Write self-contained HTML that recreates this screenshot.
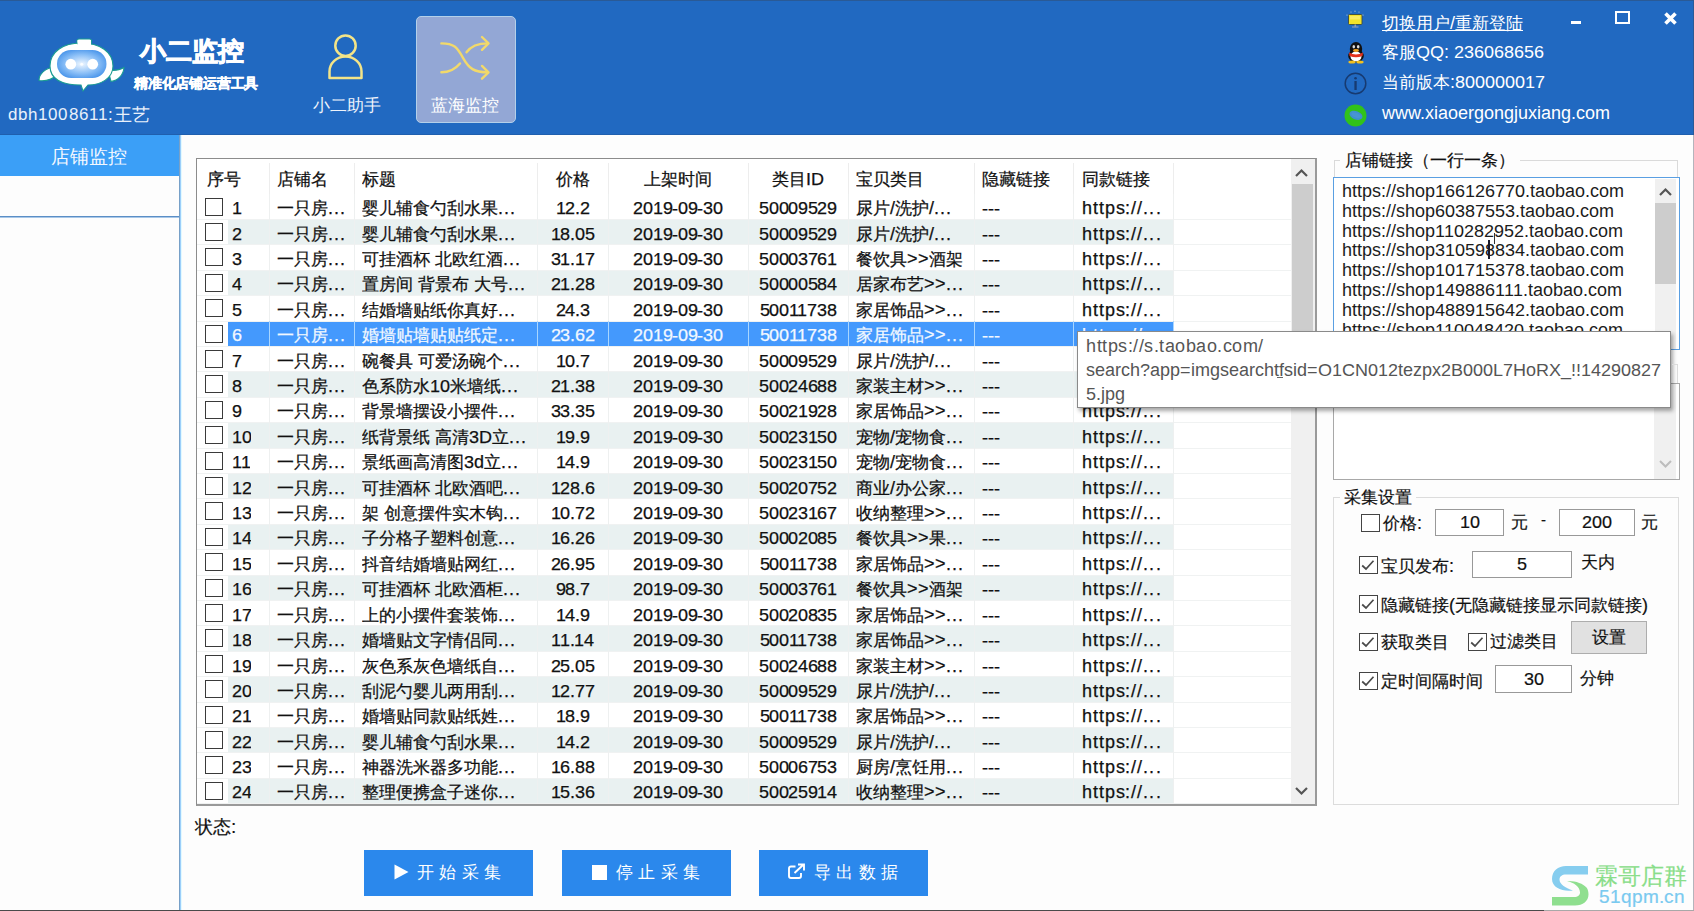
<!DOCTYPE html><html><head><meta charset="utf-8"><style>
@font-face{font-family:LS;src:local("Liberation Sans");size-adjust:106%}
*{margin:0;padding:0;box-sizing:border-box}
html,body{width:1694px;height:911px;overflow:hidden;background:#fdfdfd;font-family:LS,"Liberation Sans",sans-serif;color:#111;-webkit-text-stroke-width:0.2px}
.a{position:absolute;white-space:nowrap}
#hdr{position:absolute;left:0;top:0;width:1694px;height:135px;background:#2169c1}
.w{color:#fff;-webkit-text-stroke-width:0}
.cb{position:absolute;width:18px;height:18px;border:1.6px solid #3a3a3a;background:#fff}
.cell{position:absolute;height:25px;line-height:25px;font-size:17px;white-space:nowrap;overflow:hidden}
.c{text-align:center}
.num{letter-spacing:-0.3px}
.cell{-webkit-text-stroke-width:0.25px}
.hs{letter-spacing:0.9px}
.el{letter-spacing:1.2px}
.btn{position:absolute;top:850px;width:169px;height:46px;background:#2b88ec;color:#fff;font-size:17px;line-height:45px;letter-spacing:5.3px;-webkit-text-stroke-width:0}
.inp{position:absolute;background:#fff;border:1px solid #999;text-align:center;font-size:17px}
.sc{position:absolute;width:18.5px;height:18px;border:1.7px solid #444;background:#fff}
</style></head><body>
<div id="hdr"></div>
<div class="a" style="left:0;top:0;width:1694px;height:1px;background:#2a5a96"></div>
<div class="a" style="left:0;top:134px;width:1694px;height:1px;background:#1f5fae"></div>
<div class="a" style="left:1693px;top:0;width:1px;height:135px;background:#2a5a96"></div>
<svg class="a" style="left:30px;top:30px" width="100" height="70" viewBox="0 0 100 70">
<defs><radialGradient id="fg" cx="50%" cy="50%" r="60%"><stop offset="0" stop-color="#eef6ff"/><stop offset="0.55" stop-color="#8cc0f7"/><stop offset="1" stop-color="#3f8ee8"/></radialGradient></defs>
<g stroke="#1a9c92" stroke-width="1.1" fill="#fff">
<path d="M25 37 C15 38 9 44 9 50.5 C17 51.5 23 48.5 27 45 Z"/>
<path d="M78 40 C85 41 90 40 94 37.5 C93.5 45 88 50.5 81 51.5 Z"/>
<path d="M51 13 C70 13 83 22 83 36 C83 49 70 55 58 55 L53 61 L51 55 C32 55 20 49 20 36 C20 22 33 13 51 13Z"/>
<rect x="47" y="9" width="14.5" height="5" rx="2"/>
</g>
<rect x="47.5" y="10" width="13.5" height="6" fill="#fff"/>
<rect x="27" y="20" width="49.5" height="28" rx="14" fill="url(#fg)"/>
<circle cx="40.8" cy="34.2" r="5.4" fill="#fff"/><circle cx="62.7" cy="34.2" r="5.4" fill="#fff"/>
<circle cx="51.7" cy="34.2" r="1.5" fill="#fff" opacity="0.8"/>
</svg>
<div class="a w" style="left:140px;top:35px;font-size:26px;font-weight:bold;line-height:32px;-webkit-text-stroke:0.9px #fff">小二监控</div>
<div class="a w" style="left:134px;top:74px;font-size:14px;font-weight:bold;line-height:18px;letter-spacing:-0.2px;-webkit-text-stroke:0.4px #fff">精准化店铺运营工具</div>
<div class="a w" style="left:8px;top:102px;font-size:16.5px;line-height:24px;color:#e8f0fb"><span style="letter-spacing:1.1px">dbh1008611:</span><span style="font-size:17.5px;position:relative;top:0.5px">王艺</span></div>
<svg class="a" style="left:320px;top:30px" width="50" height="55" viewBox="0 0 50 55">
<circle cx="25.5" cy="15.7" r="10.2" stroke="#f3e488" stroke-width="2.5" fill="none"/>
<path d="M9.5 48 L9.5 41.5 A16 15 0 0 1 41.5 41.5 L41.5 48 Z" stroke="#f3e488" stroke-width="2.5" fill="none" stroke-linejoin="round"/>
</svg>
<div class="a w" style="left:313px;top:94px;font-size:17px;line-height:22px;color:#eef3fb">小二助手</div>
<div class="a" style="left:416px;top:16px;width:100px;height:107px;background:#93a7d5;border:1px solid #b4d0ea;border-radius:5px"></div>
<svg class="a" style="left:436.5px;top:33.5px" width="56" height="50" viewBox="0 0 56 50">
<g stroke="#f2d96a" stroke-width="2.4" fill="none" stroke-linecap="round" stroke-linejoin="round">
<path d="M4.4 9.4 C17 9.4 20 13 26 23.8 C32 34.6 37 38.3 51 38.3"/>
<path d="M4.4 38.3 C13 38.3 18 35.5 23 29.5"/>
<path d="M29.5 18.3 C34 12 40 9.4 51 9.4"/>
<path d="M45 3 L51.5 9.4 L45 15.8"/>
<path d="M45 31.9 L51.5 38.3 L45 44.7"/>
</g>
</svg>
<div class="a w" style="left:431px;top:94px;font-size:17px;line-height:22px">蓝海监控</div>
<svg class="a" style="left:1345px;top:10px" width="22" height="20" viewBox="0 0 22 20">
<rect x="3.5" y="4.5" width="13.5" height="10" rx="1" fill="#f3e22a" stroke="#3d4a3a" stroke-width="0.9"/>
<rect x="5" y="6" width="10" height="3.5" fill="#fbf07a" opacity="0.7"/>
<rect x="9.5" y="14.5" width="1.6" height="2.2" fill="#9aa0a0"/><rect x="7" y="16.5" width="6.5" height="1" fill="#9aa0c0"/>
<circle cx="6" cy="2" r="0.6" fill="#bcd"/><circle cx="10" cy="1.2" r="0.6" fill="#bcd"/><circle cx="14" cy="2" r="0.6" fill="#bcd"/><circle cx="18" cy="5" r="0.6" fill="#bcd"/><circle cx="2" cy="5" r="0.6" fill="#bcd"/>
</svg>
<div class="a w" style="left:1382px;top:12px;font-size:17px;line-height:22px;text-decoration:underline">切换用户/重新登陆</div>
<svg class="a" style="left:1346px;top:41px" width="20" height="23" viewBox="0 0 20 23">
<ellipse cx="10" cy="8" rx="6.2" ry="7" fill="#111"/>
<ellipse cx="10" cy="15" rx="7.8" ry="6.5" fill="#111"/>
<ellipse cx="10" cy="15.5" rx="5.5" ry="5" fill="#fff"/>
<path d="M3 11.5 Q10 15.5 17 11.5 L16.5 15 Q10 17.5 3.5 15Z" fill="#e4321c"/>
<ellipse cx="7.8" cy="5.8" rx="1.3" ry="1.8" fill="#ddd"/><ellipse cx="12.2" cy="5.8" rx="1.3" ry="1.8" fill="#ddd"/>
<ellipse cx="10" cy="9.5" rx="3" ry="1.4" fill="#f0a020"/>
<ellipse cx="6" cy="21" rx="3.6" ry="1.5" fill="#f2c020"/><ellipse cx="14" cy="21" rx="3.6" ry="1.5" fill="#f2c020"/>
</svg>
<div class="a w" style="left:1382px;top:41px;font-size:17px;line-height:22px">客服QQ: 236068656</div>
<svg class="a" style="left:1343.5px;top:71.5px" width="23" height="23" viewBox="0 0 23 23">
<circle cx="11.5" cy="11.5" r="10.3" stroke="#173a70" stroke-width="1.5" fill="none"/>
<rect x="10.4" y="9" width="2.3" height="9" fill="#173a70"/><circle cx="11.55" cy="6.2" r="1.3" fill="#173a70"/>
</svg>
<div class="a w" style="left:1382px;top:71px;font-size:17px;line-height:22px">当前版本:800000017</div>
<svg class="a" style="left:1343.5px;top:103.5px" width="23" height="23" viewBox="0 0 23 23">
<circle cx="11.5" cy="11.5" r="11" fill="#31c21a"/>
<ellipse cx="12" cy="11.3" rx="6.8" ry="4.2" transform="rotate(22 12 11.3)" fill="#3f8fcf"/>
<ellipse cx="12" cy="11.3" rx="4.8" ry="2.4" transform="rotate(22 12 11.3)" fill="#4d9ad6" opacity="0.6"/>
</svg>
<div class="a w" style="left:1382px;top:102px;font-size:16.7px;line-height:22px">www.xiaoergongjuxiang.com</div>
<div class="a" style="left:1571px;top:21px;width:10px;height:3px;background:#fff"></div>
<div class="a" style="left:1615px;top:11px;width:15px;height:13px;border:2.5px solid #fff"></div>
<svg class="a" style="left:1663px;top:11px" width="15" height="15" viewBox="0 0 15 15">
<path d="M2.5 2.5 L12.5 12.5 M12.5 2.5 L2.5 12.5" stroke="#fff" stroke-width="3.6"/></svg>
<div class="a" style="left:0;top:135px;width:179px;height:41px;background:#3b9ff7"></div>
<div class="a w" style="left:51px;top:143.5px;font-size:19px;line-height:24px;color:#f3f8ff">店铺监控</div>
<div class="a" style="left:0;top:216px;width:179px;height:1px;background:#5b8ec6"></div><div class="a" style="left:0;top:217px;width:179px;height:1px;background:#a9c8e8"></div>
<div class="a" style="left:179px;top:135px;width:1px;height:776px;background:#77a0c8"></div>
<div class="a" style="left:180px;top:135px;width:1px;height:776px;background:#9ccffa"></div>
<div class="a" style="left:181px;top:135px;width:1px;height:776px;background:#e3f9ff"></div>
<div class="a" style="left:196px;top:158px;width:1121px;height:648px;background:#fff;border:1px solid #8c8c8c;border-bottom:2px solid #9a9a9a;border-right:2px solid #9a9a9a"></div>
<div class="a" style="left:269px;top:163px;width:1px;height:31px;background:#ededed"></div>
<div class="a" style="left:354px;top:163px;width:1px;height:31px;background:#ededed"></div>
<div class="a" style="left:537px;top:163px;width:1px;height:31px;background:#ededed"></div>
<div class="a" style="left:608px;top:163px;width:1px;height:31px;background:#ededed"></div>
<div class="a" style="left:748px;top:163px;width:1px;height:31px;background:#ededed"></div>
<div class="a" style="left:848px;top:163px;width:1px;height:31px;background:#ededed"></div>
<div class="a" style="left:974px;top:163px;width:1px;height:31px;background:#ededed"></div>
<div class="a" style="left:1073px;top:163px;width:1px;height:31px;background:#ededed"></div>
<div class="a" style="left:1173px;top:163px;width:1px;height:31px;background:#ededed"></div>
<div class="cell" style="left:207px;top:167px;width:62px">序号</div>
<div class="cell" style="left:277px;top:167px;width:77px">店铺名</div>
<div class="cell" style="left:362px;top:167px;width:175px">标题</div>
<div class="cell c" style="left:537px;top:167px;width:71px">价格</div>
<div class="cell c" style="left:608px;top:167px;width:140px">上架时间</div>
<div class="cell c" style="left:748px;top:167px;width:100px">类目ID</div>
<div class="cell" style="left:856px;top:167px;width:118px">宝贝类目</div>
<div class="cell" style="left:982px;top:167px;width:91px">隐藏链接</div>
<div class="cell" style="left:1082px;top:167px;width:91px">同款链接</div>
<div class="a" style="left:197px;top:219px;width:1094px;height:1px;background:#f0f2f2"></div>
<div class="a" style="left:269px;top:194px;width:1px;height:25px;background:#eef0f0"></div>
<div class="a" style="left:354px;top:194px;width:1px;height:25px;background:#eef0f0"></div>
<div class="a" style="left:537px;top:194px;width:1px;height:25px;background:#eef0f0"></div>
<div class="a" style="left:608px;top:194px;width:1px;height:25px;background:#eef0f0"></div>
<div class="a" style="left:748px;top:194px;width:1px;height:25px;background:#eef0f0"></div>
<div class="a" style="left:848px;top:194px;width:1px;height:25px;background:#eef0f0"></div>
<div class="a" style="left:974px;top:194px;width:1px;height:25px;background:#eef0f0"></div>
<div class="a" style="left:1073px;top:194px;width:1px;height:25px;background:#eef0f0"></div>
<div class="a" style="left:1173px;top:194px;width:1px;height:25px;background:#eef0f0"></div>
<div class="cb" style="left:205px;top:198px"></div>
<div class="cell num" style="left:232px;top:196px;">1</div>
<div class="cell" style="left:277px;top:196px;">一只房<span class="el">...</span></div>
<div class="cell" style="left:362px;top:196px;">婴儿辅食勺刮水果<span class="el">...</span></div>
<div class="cell num c" style="left:537px;top:196px;width:71px;">12.2</div>
<div class="cell num c" style="left:608px;top:196px;width:140px;">2019-09-30</div>
<div class="cell num c" style="left:748px;top:196px;width:100px;">50009529</div>
<div class="cell" style="left:856px;top:196px;">尿片/洗护/<span class="el">...</span></div>
<div class="cell" style="left:982px;top:196px;">---</div>
<div class="cell" style="left:1082px;top:196px;"><span class="hs">https://</span><span class="el">...</span></div>
<div class="a" style="left:228px;top:220px;width:945px;height:25px;background:#e9f1f1"></div>
<div class="a" style="left:197px;top:244px;width:1094px;height:1px;background:#f0f2f2"></div>
<div class="a" style="left:269px;top:219px;width:1px;height:25px;background:#eef0f0"></div>
<div class="a" style="left:354px;top:219px;width:1px;height:25px;background:#eef0f0"></div>
<div class="a" style="left:537px;top:219px;width:1px;height:25px;background:#eef0f0"></div>
<div class="a" style="left:608px;top:219px;width:1px;height:25px;background:#eef0f0"></div>
<div class="a" style="left:748px;top:219px;width:1px;height:25px;background:#eef0f0"></div>
<div class="a" style="left:848px;top:219px;width:1px;height:25px;background:#eef0f0"></div>
<div class="a" style="left:974px;top:219px;width:1px;height:25px;background:#eef0f0"></div>
<div class="a" style="left:1073px;top:219px;width:1px;height:25px;background:#eef0f0"></div>
<div class="a" style="left:1173px;top:219px;width:1px;height:25px;background:#eef0f0"></div>
<div class="cb" style="left:205px;top:223px"></div>
<div class="cell num" style="left:232px;top:222px;">2</div>
<div class="cell" style="left:277px;top:222px;">一只房<span class="el">...</span></div>
<div class="cell" style="left:362px;top:222px;">婴儿辅食勺刮水果<span class="el">...</span></div>
<div class="cell num c" style="left:537px;top:222px;width:71px;">18.05</div>
<div class="cell num c" style="left:608px;top:222px;width:140px;">2019-09-30</div>
<div class="cell num c" style="left:748px;top:222px;width:100px;">50009529</div>
<div class="cell" style="left:856px;top:222px;">尿片/洗护/<span class="el">...</span></div>
<div class="cell" style="left:982px;top:222px;">---</div>
<div class="cell" style="left:1082px;top:222px;"><span class="hs">https://</span><span class="el">...</span></div>
<div class="a" style="left:197px;top:270px;width:1094px;height:1px;background:#f0f2f2"></div>
<div class="a" style="left:269px;top:244px;width:1px;height:26px;background:#eef0f0"></div>
<div class="a" style="left:354px;top:244px;width:1px;height:26px;background:#eef0f0"></div>
<div class="a" style="left:537px;top:244px;width:1px;height:26px;background:#eef0f0"></div>
<div class="a" style="left:608px;top:244px;width:1px;height:26px;background:#eef0f0"></div>
<div class="a" style="left:748px;top:244px;width:1px;height:26px;background:#eef0f0"></div>
<div class="a" style="left:848px;top:244px;width:1px;height:26px;background:#eef0f0"></div>
<div class="a" style="left:974px;top:244px;width:1px;height:26px;background:#eef0f0"></div>
<div class="a" style="left:1073px;top:244px;width:1px;height:26px;background:#eef0f0"></div>
<div class="a" style="left:1173px;top:244px;width:1px;height:26px;background:#eef0f0"></div>
<div class="cb" style="left:205px;top:248px"></div>
<div class="cell num" style="left:232px;top:247px;">3</div>
<div class="cell" style="left:277px;top:247px;">一只房<span class="el">...</span></div>
<div class="cell" style="left:362px;top:247px;">可挂酒杯 北欧红酒<span class="el">...</span></div>
<div class="cell num c" style="left:537px;top:247px;width:71px;">31.17</div>
<div class="cell num c" style="left:608px;top:247px;width:140px;">2019-09-30</div>
<div class="cell num c" style="left:748px;top:247px;width:100px;">50003761</div>
<div class="cell" style="left:856px;top:247px;">餐饮具>>酒架</div>
<div class="cell" style="left:982px;top:247px;">---</div>
<div class="cell" style="left:1082px;top:247px;"><span class="hs">https://</span><span class="el">...</span></div>
<div class="a" style="left:228px;top:271px;width:945px;height:25px;background:#e9f1f1"></div>
<div class="a" style="left:197px;top:295px;width:1094px;height:1px;background:#f0f2f2"></div>
<div class="a" style="left:269px;top:270px;width:1px;height:25px;background:#eef0f0"></div>
<div class="a" style="left:354px;top:270px;width:1px;height:25px;background:#eef0f0"></div>
<div class="a" style="left:537px;top:270px;width:1px;height:25px;background:#eef0f0"></div>
<div class="a" style="left:608px;top:270px;width:1px;height:25px;background:#eef0f0"></div>
<div class="a" style="left:748px;top:270px;width:1px;height:25px;background:#eef0f0"></div>
<div class="a" style="left:848px;top:270px;width:1px;height:25px;background:#eef0f0"></div>
<div class="a" style="left:974px;top:270px;width:1px;height:25px;background:#eef0f0"></div>
<div class="a" style="left:1073px;top:270px;width:1px;height:25px;background:#eef0f0"></div>
<div class="a" style="left:1173px;top:270px;width:1px;height:25px;background:#eef0f0"></div>
<div class="cb" style="left:205px;top:274px"></div>
<div class="cell num" style="left:232px;top:272px;">4</div>
<div class="cell" style="left:277px;top:272px;">一只房<span class="el">...</span></div>
<div class="cell" style="left:362px;top:272px;">置房间 背景布 大号<span class="el">...</span></div>
<div class="cell num c" style="left:537px;top:272px;width:71px;">21.28</div>
<div class="cell num c" style="left:608px;top:272px;width:140px;">2019-09-30</div>
<div class="cell num c" style="left:748px;top:272px;width:100px;">50000584</div>
<div class="cell" style="left:856px;top:272px;">居家布艺>><span class="el">...</span></div>
<div class="cell" style="left:982px;top:272px;">---</div>
<div class="cell" style="left:1082px;top:272px;"><span class="hs">https://</span><span class="el">...</span></div>
<div class="a" style="left:197px;top:321px;width:1094px;height:1px;background:#f0f2f2"></div>
<div class="a" style="left:269px;top:295px;width:1px;height:26px;background:#eef0f0"></div>
<div class="a" style="left:354px;top:295px;width:1px;height:26px;background:#eef0f0"></div>
<div class="a" style="left:537px;top:295px;width:1px;height:26px;background:#eef0f0"></div>
<div class="a" style="left:608px;top:295px;width:1px;height:26px;background:#eef0f0"></div>
<div class="a" style="left:748px;top:295px;width:1px;height:26px;background:#eef0f0"></div>
<div class="a" style="left:848px;top:295px;width:1px;height:26px;background:#eef0f0"></div>
<div class="a" style="left:974px;top:295px;width:1px;height:26px;background:#eef0f0"></div>
<div class="a" style="left:1073px;top:295px;width:1px;height:26px;background:#eef0f0"></div>
<div class="a" style="left:1173px;top:295px;width:1px;height:26px;background:#eef0f0"></div>
<div class="cb" style="left:205px;top:299px"></div>
<div class="cell num" style="left:232px;top:298px;">5</div>
<div class="cell" style="left:277px;top:298px;">一只房<span class="el">...</span></div>
<div class="cell" style="left:362px;top:298px;">结婚墙贴纸你真好<span class="el">...</span></div>
<div class="cell num c" style="left:537px;top:298px;width:71px;">24.3</div>
<div class="cell num c" style="left:608px;top:298px;width:140px;">2019-09-30</div>
<div class="cell num c" style="left:748px;top:298px;width:100px;">50011738</div>
<div class="cell" style="left:856px;top:298px;">家居饰品>><span class="el">...</span></div>
<div class="cell" style="left:982px;top:298px;">---</div>
<div class="cell" style="left:1082px;top:298px;"><span class="hs">https://</span><span class="el">...</span></div>
<div class="a" style="left:228px;top:322px;width:945px;height:24px;background:#4499fd"></div>
<div class="a" style="left:197px;top:346px;width:1094px;height:1px;background:#f0f2f2"></div>
<div class="a" style="left:269px;top:321px;width:1px;height:25px;background:#a9d6ff"></div>
<div class="a" style="left:354px;top:321px;width:1px;height:25px;background:#a9d6ff"></div>
<div class="a" style="left:537px;top:321px;width:1px;height:25px;background:#a9d6ff"></div>
<div class="a" style="left:608px;top:321px;width:1px;height:25px;background:#a9d6ff"></div>
<div class="a" style="left:748px;top:321px;width:1px;height:25px;background:#a9d6ff"></div>
<div class="a" style="left:848px;top:321px;width:1px;height:25px;background:#a9d6ff"></div>
<div class="a" style="left:974px;top:321px;width:1px;height:25px;background:#a9d6ff"></div>
<div class="a" style="left:1073px;top:321px;width:1px;height:25px;background:#a9d6ff"></div>
<div class="a" style="left:1173px;top:321px;width:1px;height:25px;background:#a9d6ff"></div>
<div class="cb" style="left:205px;top:325px"></div>
<div class="cell num" style="left:232px;top:323px;color:#f2f8ff;">6</div>
<div class="cell" style="left:277px;top:323px;color:#f2f8ff;">一只房<span class="el">...</span></div>
<div class="cell" style="left:362px;top:323px;color:#f2f8ff;">婚墙贴墙贴贴纸定<span class="el">...</span></div>
<div class="cell num c" style="left:537px;top:323px;width:71px;color:#f2f8ff;">23.62</div>
<div class="cell num c" style="left:608px;top:323px;width:140px;color:#f2f8ff;">2019-09-30</div>
<div class="cell num c" style="left:748px;top:323px;width:100px;color:#f2f8ff;">50011738</div>
<div class="cell" style="left:856px;top:323px;color:#f2f8ff;">家居饰品>><span class="el">...</span></div>
<div class="cell" style="left:982px;top:323px;color:#f2f8ff;">---</div>
<div class="cell" style="left:1082px;top:323px;color:#f2f8ff;"><span class="hs">https://</span><span class="el">...</span></div>
<div class="a" style="left:197px;top:371px;width:1094px;height:1px;background:#f0f2f2"></div>
<div class="a" style="left:269px;top:346px;width:1px;height:25px;background:#eef0f0"></div>
<div class="a" style="left:354px;top:346px;width:1px;height:25px;background:#eef0f0"></div>
<div class="a" style="left:537px;top:346px;width:1px;height:25px;background:#eef0f0"></div>
<div class="a" style="left:608px;top:346px;width:1px;height:25px;background:#eef0f0"></div>
<div class="a" style="left:748px;top:346px;width:1px;height:25px;background:#eef0f0"></div>
<div class="a" style="left:848px;top:346px;width:1px;height:25px;background:#eef0f0"></div>
<div class="a" style="left:974px;top:346px;width:1px;height:25px;background:#eef0f0"></div>
<div class="a" style="left:1073px;top:346px;width:1px;height:25px;background:#eef0f0"></div>
<div class="a" style="left:1173px;top:346px;width:1px;height:25px;background:#eef0f0"></div>
<div class="cb" style="left:205px;top:350px"></div>
<div class="cell num" style="left:232px;top:349px;">7</div>
<div class="cell" style="left:277px;top:349px;">一只房<span class="el">...</span></div>
<div class="cell" style="left:362px;top:349px;">碗餐具 可爱汤碗个<span class="el">...</span></div>
<div class="cell num c" style="left:537px;top:349px;width:71px;">10.7</div>
<div class="cell num c" style="left:608px;top:349px;width:140px;">2019-09-30</div>
<div class="cell num c" style="left:748px;top:349px;width:100px;">50009529</div>
<div class="cell" style="left:856px;top:349px;">尿片/洗护/<span class="el">...</span></div>
<div class="cell" style="left:982px;top:349px;">---</div>
<div class="cell" style="left:1082px;top:349px;"><span class="hs">https://</span><span class="el">...</span></div>
<div class="a" style="left:228px;top:372px;width:945px;height:26px;background:#e9f1f1"></div>
<div class="a" style="left:197px;top:397px;width:1094px;height:1px;background:#f0f2f2"></div>
<div class="a" style="left:269px;top:371px;width:1px;height:26px;background:#eef0f0"></div>
<div class="a" style="left:354px;top:371px;width:1px;height:26px;background:#eef0f0"></div>
<div class="a" style="left:537px;top:371px;width:1px;height:26px;background:#eef0f0"></div>
<div class="a" style="left:608px;top:371px;width:1px;height:26px;background:#eef0f0"></div>
<div class="a" style="left:748px;top:371px;width:1px;height:26px;background:#eef0f0"></div>
<div class="a" style="left:848px;top:371px;width:1px;height:26px;background:#eef0f0"></div>
<div class="a" style="left:974px;top:371px;width:1px;height:26px;background:#eef0f0"></div>
<div class="a" style="left:1073px;top:371px;width:1px;height:26px;background:#eef0f0"></div>
<div class="a" style="left:1173px;top:371px;width:1px;height:26px;background:#eef0f0"></div>
<div class="cb" style="left:205px;top:375px"></div>
<div class="cell num" style="left:232px;top:374px;">8</div>
<div class="cell" style="left:277px;top:374px;">一只房<span class="el">...</span></div>
<div class="cell" style="left:362px;top:374px;">色系防水10米墙纸<span class="el">...</span></div>
<div class="cell num c" style="left:537px;top:374px;width:71px;">21.38</div>
<div class="cell num c" style="left:608px;top:374px;width:140px;">2019-09-30</div>
<div class="cell num c" style="left:748px;top:374px;width:100px;">50024688</div>
<div class="cell" style="left:856px;top:374px;">家装主材>><span class="el">...</span></div>
<div class="cell" style="left:982px;top:374px;">---</div>
<div class="cell" style="left:1082px;top:374px;"><span class="hs">https://</span><span class="el">...</span></div>
<div class="a" style="left:197px;top:422px;width:1094px;height:1px;background:#f0f2f2"></div>
<div class="a" style="left:269px;top:397px;width:1px;height:25px;background:#eef0f0"></div>
<div class="a" style="left:354px;top:397px;width:1px;height:25px;background:#eef0f0"></div>
<div class="a" style="left:537px;top:397px;width:1px;height:25px;background:#eef0f0"></div>
<div class="a" style="left:608px;top:397px;width:1px;height:25px;background:#eef0f0"></div>
<div class="a" style="left:748px;top:397px;width:1px;height:25px;background:#eef0f0"></div>
<div class="a" style="left:848px;top:397px;width:1px;height:25px;background:#eef0f0"></div>
<div class="a" style="left:974px;top:397px;width:1px;height:25px;background:#eef0f0"></div>
<div class="a" style="left:1073px;top:397px;width:1px;height:25px;background:#eef0f0"></div>
<div class="a" style="left:1173px;top:397px;width:1px;height:25px;background:#eef0f0"></div>
<div class="cb" style="left:205px;top:401px"></div>
<div class="cell num" style="left:232px;top:399px;">9</div>
<div class="cell" style="left:277px;top:399px;">一只房<span class="el">...</span></div>
<div class="cell" style="left:362px;top:399px;">背景墙摆设小摆件<span class="el">...</span></div>
<div class="cell num c" style="left:537px;top:399px;width:71px;">33.35</div>
<div class="cell num c" style="left:608px;top:399px;width:140px;">2019-09-30</div>
<div class="cell num c" style="left:748px;top:399px;width:100px;">50021928</div>
<div class="cell" style="left:856px;top:399px;">家居饰品>><span class="el">...</span></div>
<div class="cell" style="left:982px;top:399px;">---</div>
<div class="cell" style="left:1082px;top:399px;"><span class="hs">https://</span><span class="el">...</span></div>
<div class="a" style="left:228px;top:423px;width:945px;height:26px;background:#e9f1f1"></div>
<div class="a" style="left:197px;top:448px;width:1094px;height:1px;background:#f0f2f2"></div>
<div class="a" style="left:269px;top:422px;width:1px;height:26px;background:#eef0f0"></div>
<div class="a" style="left:354px;top:422px;width:1px;height:26px;background:#eef0f0"></div>
<div class="a" style="left:537px;top:422px;width:1px;height:26px;background:#eef0f0"></div>
<div class="a" style="left:608px;top:422px;width:1px;height:26px;background:#eef0f0"></div>
<div class="a" style="left:748px;top:422px;width:1px;height:26px;background:#eef0f0"></div>
<div class="a" style="left:848px;top:422px;width:1px;height:26px;background:#eef0f0"></div>
<div class="a" style="left:974px;top:422px;width:1px;height:26px;background:#eef0f0"></div>
<div class="a" style="left:1073px;top:422px;width:1px;height:26px;background:#eef0f0"></div>
<div class="a" style="left:1173px;top:422px;width:1px;height:26px;background:#eef0f0"></div>
<div class="cb" style="left:205px;top:426px"></div>
<div class="cell num" style="left:232px;top:425px;">10</div>
<div class="cell" style="left:277px;top:425px;">一只房<span class="el">...</span></div>
<div class="cell" style="left:362px;top:425px;">纸背景纸 高清3D立<span class="el">...</span></div>
<div class="cell num c" style="left:537px;top:425px;width:71px;">19.9</div>
<div class="cell num c" style="left:608px;top:425px;width:140px;">2019-09-30</div>
<div class="cell num c" style="left:748px;top:425px;width:100px;">50023150</div>
<div class="cell" style="left:856px;top:425px;">宠物/宠物食<span class="el">...</span></div>
<div class="cell" style="left:982px;top:425px;">---</div>
<div class="cell" style="left:1082px;top:425px;"><span class="hs">https://</span><span class="el">...</span></div>
<div class="a" style="left:197px;top:473px;width:1094px;height:1px;background:#f0f2f2"></div>
<div class="a" style="left:269px;top:448px;width:1px;height:25px;background:#eef0f0"></div>
<div class="a" style="left:354px;top:448px;width:1px;height:25px;background:#eef0f0"></div>
<div class="a" style="left:537px;top:448px;width:1px;height:25px;background:#eef0f0"></div>
<div class="a" style="left:608px;top:448px;width:1px;height:25px;background:#eef0f0"></div>
<div class="a" style="left:748px;top:448px;width:1px;height:25px;background:#eef0f0"></div>
<div class="a" style="left:848px;top:448px;width:1px;height:25px;background:#eef0f0"></div>
<div class="a" style="left:974px;top:448px;width:1px;height:25px;background:#eef0f0"></div>
<div class="a" style="left:1073px;top:448px;width:1px;height:25px;background:#eef0f0"></div>
<div class="a" style="left:1173px;top:448px;width:1px;height:25px;background:#eef0f0"></div>
<div class="cb" style="left:205px;top:452px"></div>
<div class="cell num" style="left:232px;top:450px;">11</div>
<div class="cell" style="left:277px;top:450px;">一只房<span class="el">...</span></div>
<div class="cell" style="left:362px;top:450px;">景纸画高清图3d立<span class="el">...</span></div>
<div class="cell num c" style="left:537px;top:450px;width:71px;">14.9</div>
<div class="cell num c" style="left:608px;top:450px;width:140px;">2019-09-30</div>
<div class="cell num c" style="left:748px;top:450px;width:100px;">50023150</div>
<div class="cell" style="left:856px;top:450px;">宠物/宠物食<span class="el">...</span></div>
<div class="cell" style="left:982px;top:450px;">---</div>
<div class="cell" style="left:1082px;top:450px;"><span class="hs">https://</span><span class="el">...</span></div>
<div class="a" style="left:228px;top:474px;width:945px;height:25px;background:#e9f1f1"></div>
<div class="a" style="left:197px;top:498px;width:1094px;height:1px;background:#f0f2f2"></div>
<div class="a" style="left:269px;top:473px;width:1px;height:25px;background:#eef0f0"></div>
<div class="a" style="left:354px;top:473px;width:1px;height:25px;background:#eef0f0"></div>
<div class="a" style="left:537px;top:473px;width:1px;height:25px;background:#eef0f0"></div>
<div class="a" style="left:608px;top:473px;width:1px;height:25px;background:#eef0f0"></div>
<div class="a" style="left:748px;top:473px;width:1px;height:25px;background:#eef0f0"></div>
<div class="a" style="left:848px;top:473px;width:1px;height:25px;background:#eef0f0"></div>
<div class="a" style="left:974px;top:473px;width:1px;height:25px;background:#eef0f0"></div>
<div class="a" style="left:1073px;top:473px;width:1px;height:25px;background:#eef0f0"></div>
<div class="a" style="left:1173px;top:473px;width:1px;height:25px;background:#eef0f0"></div>
<div class="cb" style="left:205px;top:477px"></div>
<div class="cell num" style="left:232px;top:476px;">12</div>
<div class="cell" style="left:277px;top:476px;">一只房<span class="el">...</span></div>
<div class="cell" style="left:362px;top:476px;">可挂酒杯 北欧酒吧<span class="el">...</span></div>
<div class="cell num c" style="left:537px;top:476px;width:71px;">128.6</div>
<div class="cell num c" style="left:608px;top:476px;width:140px;">2019-09-30</div>
<div class="cell num c" style="left:748px;top:476px;width:100px;">50020752</div>
<div class="cell" style="left:856px;top:476px;">商业/办公家<span class="el">...</span></div>
<div class="cell" style="left:982px;top:476px;">---</div>
<div class="cell" style="left:1082px;top:476px;"><span class="hs">https://</span><span class="el">...</span></div>
<div class="a" style="left:197px;top:524px;width:1094px;height:1px;background:#f0f2f2"></div>
<div class="a" style="left:269px;top:498px;width:1px;height:26px;background:#eef0f0"></div>
<div class="a" style="left:354px;top:498px;width:1px;height:26px;background:#eef0f0"></div>
<div class="a" style="left:537px;top:498px;width:1px;height:26px;background:#eef0f0"></div>
<div class="a" style="left:608px;top:498px;width:1px;height:26px;background:#eef0f0"></div>
<div class="a" style="left:748px;top:498px;width:1px;height:26px;background:#eef0f0"></div>
<div class="a" style="left:848px;top:498px;width:1px;height:26px;background:#eef0f0"></div>
<div class="a" style="left:974px;top:498px;width:1px;height:26px;background:#eef0f0"></div>
<div class="a" style="left:1073px;top:498px;width:1px;height:26px;background:#eef0f0"></div>
<div class="a" style="left:1173px;top:498px;width:1px;height:26px;background:#eef0f0"></div>
<div class="cb" style="left:205px;top:502px"></div>
<div class="cell num" style="left:232px;top:501px;">13</div>
<div class="cell" style="left:277px;top:501px;">一只房<span class="el">...</span></div>
<div class="cell" style="left:362px;top:501px;">架 创意摆件实木钩<span class="el">...</span></div>
<div class="cell num c" style="left:537px;top:501px;width:71px;">10.72</div>
<div class="cell num c" style="left:608px;top:501px;width:140px;">2019-09-30</div>
<div class="cell num c" style="left:748px;top:501px;width:100px;">50023167</div>
<div class="cell" style="left:856px;top:501px;">收纳整理>><span class="el">...</span></div>
<div class="cell" style="left:982px;top:501px;">---</div>
<div class="cell" style="left:1082px;top:501px;"><span class="hs">https://</span><span class="el">...</span></div>
<div class="a" style="left:228px;top:525px;width:945px;height:25px;background:#e9f1f1"></div>
<div class="a" style="left:197px;top:549px;width:1094px;height:1px;background:#f0f2f2"></div>
<div class="a" style="left:269px;top:524px;width:1px;height:25px;background:#eef0f0"></div>
<div class="a" style="left:354px;top:524px;width:1px;height:25px;background:#eef0f0"></div>
<div class="a" style="left:537px;top:524px;width:1px;height:25px;background:#eef0f0"></div>
<div class="a" style="left:608px;top:524px;width:1px;height:25px;background:#eef0f0"></div>
<div class="a" style="left:748px;top:524px;width:1px;height:25px;background:#eef0f0"></div>
<div class="a" style="left:848px;top:524px;width:1px;height:25px;background:#eef0f0"></div>
<div class="a" style="left:974px;top:524px;width:1px;height:25px;background:#eef0f0"></div>
<div class="a" style="left:1073px;top:524px;width:1px;height:25px;background:#eef0f0"></div>
<div class="a" style="left:1173px;top:524px;width:1px;height:25px;background:#eef0f0"></div>
<div class="cb" style="left:205px;top:528px"></div>
<div class="cell num" style="left:232px;top:526px;">14</div>
<div class="cell" style="left:277px;top:526px;">一只房<span class="el">...</span></div>
<div class="cell" style="left:362px;top:526px;">子分格子塑料创意<span class="el">...</span></div>
<div class="cell num c" style="left:537px;top:526px;width:71px;">16.26</div>
<div class="cell num c" style="left:608px;top:526px;width:140px;">2019-09-30</div>
<div class="cell num c" style="left:748px;top:526px;width:100px;">50002085</div>
<div class="cell" style="left:856px;top:526px;">餐饮具>>果<span class="el">...</span></div>
<div class="cell" style="left:982px;top:526px;">---</div>
<div class="cell" style="left:1082px;top:526px;"><span class="hs">https://</span><span class="el">...</span></div>
<div class="a" style="left:197px;top:575px;width:1094px;height:1px;background:#f0f2f2"></div>
<div class="a" style="left:269px;top:549px;width:1px;height:26px;background:#eef0f0"></div>
<div class="a" style="left:354px;top:549px;width:1px;height:26px;background:#eef0f0"></div>
<div class="a" style="left:537px;top:549px;width:1px;height:26px;background:#eef0f0"></div>
<div class="a" style="left:608px;top:549px;width:1px;height:26px;background:#eef0f0"></div>
<div class="a" style="left:748px;top:549px;width:1px;height:26px;background:#eef0f0"></div>
<div class="a" style="left:848px;top:549px;width:1px;height:26px;background:#eef0f0"></div>
<div class="a" style="left:974px;top:549px;width:1px;height:26px;background:#eef0f0"></div>
<div class="a" style="left:1073px;top:549px;width:1px;height:26px;background:#eef0f0"></div>
<div class="a" style="left:1173px;top:549px;width:1px;height:26px;background:#eef0f0"></div>
<div class="cb" style="left:205px;top:553px"></div>
<div class="cell num" style="left:232px;top:552px;">15</div>
<div class="cell" style="left:277px;top:552px;">一只房<span class="el">...</span></div>
<div class="cell" style="left:362px;top:552px;">抖音结婚墙贴网红<span class="el">...</span></div>
<div class="cell num c" style="left:537px;top:552px;width:71px;">26.95</div>
<div class="cell num c" style="left:608px;top:552px;width:140px;">2019-09-30</div>
<div class="cell num c" style="left:748px;top:552px;width:100px;">50011738</div>
<div class="cell" style="left:856px;top:552px;">家居饰品>><span class="el">...</span></div>
<div class="cell" style="left:982px;top:552px;">---</div>
<div class="cell" style="left:1082px;top:552px;"><span class="hs">https://</span><span class="el">...</span></div>
<div class="a" style="left:228px;top:576px;width:945px;height:25px;background:#e9f1f1"></div>
<div class="a" style="left:197px;top:600px;width:1094px;height:1px;background:#f0f2f2"></div>
<div class="a" style="left:269px;top:575px;width:1px;height:25px;background:#eef0f0"></div>
<div class="a" style="left:354px;top:575px;width:1px;height:25px;background:#eef0f0"></div>
<div class="a" style="left:537px;top:575px;width:1px;height:25px;background:#eef0f0"></div>
<div class="a" style="left:608px;top:575px;width:1px;height:25px;background:#eef0f0"></div>
<div class="a" style="left:748px;top:575px;width:1px;height:25px;background:#eef0f0"></div>
<div class="a" style="left:848px;top:575px;width:1px;height:25px;background:#eef0f0"></div>
<div class="a" style="left:974px;top:575px;width:1px;height:25px;background:#eef0f0"></div>
<div class="a" style="left:1073px;top:575px;width:1px;height:25px;background:#eef0f0"></div>
<div class="a" style="left:1173px;top:575px;width:1px;height:25px;background:#eef0f0"></div>
<div class="cb" style="left:205px;top:579px"></div>
<div class="cell num" style="left:232px;top:577px;">16</div>
<div class="cell" style="left:277px;top:577px;">一只房<span class="el">...</span></div>
<div class="cell" style="left:362px;top:577px;">可挂酒杯 北欧酒柜<span class="el">...</span></div>
<div class="cell num c" style="left:537px;top:577px;width:71px;">98.7</div>
<div class="cell num c" style="left:608px;top:577px;width:140px;">2019-09-30</div>
<div class="cell num c" style="left:748px;top:577px;width:100px;">50003761</div>
<div class="cell" style="left:856px;top:577px;">餐饮具>>酒架</div>
<div class="cell" style="left:982px;top:577px;">---</div>
<div class="cell" style="left:1082px;top:577px;"><span class="hs">https://</span><span class="el">...</span></div>
<div class="a" style="left:197px;top:625px;width:1094px;height:1px;background:#f0f2f2"></div>
<div class="a" style="left:269px;top:600px;width:1px;height:25px;background:#eef0f0"></div>
<div class="a" style="left:354px;top:600px;width:1px;height:25px;background:#eef0f0"></div>
<div class="a" style="left:537px;top:600px;width:1px;height:25px;background:#eef0f0"></div>
<div class="a" style="left:608px;top:600px;width:1px;height:25px;background:#eef0f0"></div>
<div class="a" style="left:748px;top:600px;width:1px;height:25px;background:#eef0f0"></div>
<div class="a" style="left:848px;top:600px;width:1px;height:25px;background:#eef0f0"></div>
<div class="a" style="left:974px;top:600px;width:1px;height:25px;background:#eef0f0"></div>
<div class="a" style="left:1073px;top:600px;width:1px;height:25px;background:#eef0f0"></div>
<div class="a" style="left:1173px;top:600px;width:1px;height:25px;background:#eef0f0"></div>
<div class="cb" style="left:205px;top:604px"></div>
<div class="cell num" style="left:232px;top:603px;">17</div>
<div class="cell" style="left:277px;top:603px;">一只房<span class="el">...</span></div>
<div class="cell" style="left:362px;top:603px;">上的小摆件套装饰<span class="el">...</span></div>
<div class="cell num c" style="left:537px;top:603px;width:71px;">14.9</div>
<div class="cell num c" style="left:608px;top:603px;width:140px;">2019-09-30</div>
<div class="cell num c" style="left:748px;top:603px;width:100px;">50020835</div>
<div class="cell" style="left:856px;top:603px;">家居饰品>><span class="el">...</span></div>
<div class="cell" style="left:982px;top:603px;">---</div>
<div class="cell" style="left:1082px;top:603px;"><span class="hs">https://</span><span class="el">...</span></div>
<div class="a" style="left:228px;top:626px;width:945px;height:26px;background:#e9f1f1"></div>
<div class="a" style="left:197px;top:651px;width:1094px;height:1px;background:#f0f2f2"></div>
<div class="a" style="left:269px;top:625px;width:1px;height:26px;background:#eef0f0"></div>
<div class="a" style="left:354px;top:625px;width:1px;height:26px;background:#eef0f0"></div>
<div class="a" style="left:537px;top:625px;width:1px;height:26px;background:#eef0f0"></div>
<div class="a" style="left:608px;top:625px;width:1px;height:26px;background:#eef0f0"></div>
<div class="a" style="left:748px;top:625px;width:1px;height:26px;background:#eef0f0"></div>
<div class="a" style="left:848px;top:625px;width:1px;height:26px;background:#eef0f0"></div>
<div class="a" style="left:974px;top:625px;width:1px;height:26px;background:#eef0f0"></div>
<div class="a" style="left:1073px;top:625px;width:1px;height:26px;background:#eef0f0"></div>
<div class="a" style="left:1173px;top:625px;width:1px;height:26px;background:#eef0f0"></div>
<div class="cb" style="left:205px;top:629px"></div>
<div class="cell num" style="left:232px;top:628px;">18</div>
<div class="cell" style="left:277px;top:628px;">一只房<span class="el">...</span></div>
<div class="cell" style="left:362px;top:628px;">婚墙贴文字情侣同<span class="el">...</span></div>
<div class="cell num c" style="left:537px;top:628px;width:71px;">11.14</div>
<div class="cell num c" style="left:608px;top:628px;width:140px;">2019-09-30</div>
<div class="cell num c" style="left:748px;top:628px;width:100px;">50011738</div>
<div class="cell" style="left:856px;top:628px;">家居饰品>><span class="el">...</span></div>
<div class="cell" style="left:982px;top:628px;">---</div>
<div class="cell" style="left:1082px;top:628px;"><span class="hs">https://</span><span class="el">...</span></div>
<div class="a" style="left:197px;top:676px;width:1094px;height:1px;background:#f0f2f2"></div>
<div class="a" style="left:269px;top:651px;width:1px;height:25px;background:#eef0f0"></div>
<div class="a" style="left:354px;top:651px;width:1px;height:25px;background:#eef0f0"></div>
<div class="a" style="left:537px;top:651px;width:1px;height:25px;background:#eef0f0"></div>
<div class="a" style="left:608px;top:651px;width:1px;height:25px;background:#eef0f0"></div>
<div class="a" style="left:748px;top:651px;width:1px;height:25px;background:#eef0f0"></div>
<div class="a" style="left:848px;top:651px;width:1px;height:25px;background:#eef0f0"></div>
<div class="a" style="left:974px;top:651px;width:1px;height:25px;background:#eef0f0"></div>
<div class="a" style="left:1073px;top:651px;width:1px;height:25px;background:#eef0f0"></div>
<div class="a" style="left:1173px;top:651px;width:1px;height:25px;background:#eef0f0"></div>
<div class="cb" style="left:205px;top:655px"></div>
<div class="cell num" style="left:232px;top:654px;">19</div>
<div class="cell" style="left:277px;top:654px;">一只房<span class="el">...</span></div>
<div class="cell" style="left:362px;top:654px;">灰色系灰色墙纸自<span class="el">...</span></div>
<div class="cell num c" style="left:537px;top:654px;width:71px;">25.05</div>
<div class="cell num c" style="left:608px;top:654px;width:140px;">2019-09-30</div>
<div class="cell num c" style="left:748px;top:654px;width:100px;">50024688</div>
<div class="cell" style="left:856px;top:654px;">家装主材>><span class="el">...</span></div>
<div class="cell" style="left:982px;top:654px;">---</div>
<div class="cell" style="left:1082px;top:654px;"><span class="hs">https://</span><span class="el">...</span></div>
<div class="a" style="left:228px;top:677px;width:945px;height:26px;background:#e9f1f1"></div>
<div class="a" style="left:197px;top:702px;width:1094px;height:1px;background:#f0f2f2"></div>
<div class="a" style="left:269px;top:676px;width:1px;height:26px;background:#eef0f0"></div>
<div class="a" style="left:354px;top:676px;width:1px;height:26px;background:#eef0f0"></div>
<div class="a" style="left:537px;top:676px;width:1px;height:26px;background:#eef0f0"></div>
<div class="a" style="left:608px;top:676px;width:1px;height:26px;background:#eef0f0"></div>
<div class="a" style="left:748px;top:676px;width:1px;height:26px;background:#eef0f0"></div>
<div class="a" style="left:848px;top:676px;width:1px;height:26px;background:#eef0f0"></div>
<div class="a" style="left:974px;top:676px;width:1px;height:26px;background:#eef0f0"></div>
<div class="a" style="left:1073px;top:676px;width:1px;height:26px;background:#eef0f0"></div>
<div class="a" style="left:1173px;top:676px;width:1px;height:26px;background:#eef0f0"></div>
<div class="cb" style="left:205px;top:680px"></div>
<div class="cell num" style="left:232px;top:679px;">20</div>
<div class="cell" style="left:277px;top:679px;">一只房<span class="el">...</span></div>
<div class="cell" style="left:362px;top:679px;">刮泥勺婴儿两用刮<span class="el">...</span></div>
<div class="cell num c" style="left:537px;top:679px;width:71px;">12.77</div>
<div class="cell num c" style="left:608px;top:679px;width:140px;">2019-09-30</div>
<div class="cell num c" style="left:748px;top:679px;width:100px;">50009529</div>
<div class="cell" style="left:856px;top:679px;">尿片/洗护/<span class="el">...</span></div>
<div class="cell" style="left:982px;top:679px;">---</div>
<div class="cell" style="left:1082px;top:679px;"><span class="hs">https://</span><span class="el">...</span></div>
<div class="a" style="left:197px;top:727px;width:1094px;height:1px;background:#f0f2f2"></div>
<div class="a" style="left:269px;top:702px;width:1px;height:25px;background:#eef0f0"></div>
<div class="a" style="left:354px;top:702px;width:1px;height:25px;background:#eef0f0"></div>
<div class="a" style="left:537px;top:702px;width:1px;height:25px;background:#eef0f0"></div>
<div class="a" style="left:608px;top:702px;width:1px;height:25px;background:#eef0f0"></div>
<div class="a" style="left:748px;top:702px;width:1px;height:25px;background:#eef0f0"></div>
<div class="a" style="left:848px;top:702px;width:1px;height:25px;background:#eef0f0"></div>
<div class="a" style="left:974px;top:702px;width:1px;height:25px;background:#eef0f0"></div>
<div class="a" style="left:1073px;top:702px;width:1px;height:25px;background:#eef0f0"></div>
<div class="a" style="left:1173px;top:702px;width:1px;height:25px;background:#eef0f0"></div>
<div class="cb" style="left:205px;top:706px"></div>
<div class="cell num" style="left:232px;top:704px;">21</div>
<div class="cell" style="left:277px;top:704px;">一只房<span class="el">...</span></div>
<div class="cell" style="left:362px;top:704px;">婚墙贴同款贴纸姓<span class="el">...</span></div>
<div class="cell num c" style="left:537px;top:704px;width:71px;">18.9</div>
<div class="cell num c" style="left:608px;top:704px;width:140px;">2019-09-30</div>
<div class="cell num c" style="left:748px;top:704px;width:100px;">50011738</div>
<div class="cell" style="left:856px;top:704px;">家居饰品>><span class="el">...</span></div>
<div class="cell" style="left:982px;top:704px;">---</div>
<div class="cell" style="left:1082px;top:704px;"><span class="hs">https://</span><span class="el">...</span></div>
<div class="a" style="left:228px;top:728px;width:945px;height:25px;background:#e9f1f1"></div>
<div class="a" style="left:197px;top:752px;width:1094px;height:1px;background:#f0f2f2"></div>
<div class="a" style="left:269px;top:727px;width:1px;height:25px;background:#eef0f0"></div>
<div class="a" style="left:354px;top:727px;width:1px;height:25px;background:#eef0f0"></div>
<div class="a" style="left:537px;top:727px;width:1px;height:25px;background:#eef0f0"></div>
<div class="a" style="left:608px;top:727px;width:1px;height:25px;background:#eef0f0"></div>
<div class="a" style="left:748px;top:727px;width:1px;height:25px;background:#eef0f0"></div>
<div class="a" style="left:848px;top:727px;width:1px;height:25px;background:#eef0f0"></div>
<div class="a" style="left:974px;top:727px;width:1px;height:25px;background:#eef0f0"></div>
<div class="a" style="left:1073px;top:727px;width:1px;height:25px;background:#eef0f0"></div>
<div class="a" style="left:1173px;top:727px;width:1px;height:25px;background:#eef0f0"></div>
<div class="cb" style="left:205px;top:731px"></div>
<div class="cell num" style="left:232px;top:730px;">22</div>
<div class="cell" style="left:277px;top:730px;">一只房<span class="el">...</span></div>
<div class="cell" style="left:362px;top:730px;">婴儿辅食勺刮水果<span class="el">...</span></div>
<div class="cell num c" style="left:537px;top:730px;width:71px;">14.2</div>
<div class="cell num c" style="left:608px;top:730px;width:140px;">2019-09-30</div>
<div class="cell num c" style="left:748px;top:730px;width:100px;">50009529</div>
<div class="cell" style="left:856px;top:730px;">尿片/洗护/<span class="el">...</span></div>
<div class="cell" style="left:982px;top:730px;">---</div>
<div class="cell" style="left:1082px;top:730px;"><span class="hs">https://</span><span class="el">...</span></div>
<div class="a" style="left:197px;top:778px;width:1094px;height:1px;background:#f0f2f2"></div>
<div class="a" style="left:269px;top:752px;width:1px;height:26px;background:#eef0f0"></div>
<div class="a" style="left:354px;top:752px;width:1px;height:26px;background:#eef0f0"></div>
<div class="a" style="left:537px;top:752px;width:1px;height:26px;background:#eef0f0"></div>
<div class="a" style="left:608px;top:752px;width:1px;height:26px;background:#eef0f0"></div>
<div class="a" style="left:748px;top:752px;width:1px;height:26px;background:#eef0f0"></div>
<div class="a" style="left:848px;top:752px;width:1px;height:26px;background:#eef0f0"></div>
<div class="a" style="left:974px;top:752px;width:1px;height:26px;background:#eef0f0"></div>
<div class="a" style="left:1073px;top:752px;width:1px;height:26px;background:#eef0f0"></div>
<div class="a" style="left:1173px;top:752px;width:1px;height:26px;background:#eef0f0"></div>
<div class="cb" style="left:205px;top:756px"></div>
<div class="cell num" style="left:232px;top:755px;">23</div>
<div class="cell" style="left:277px;top:755px;">一只房<span class="el">...</span></div>
<div class="cell" style="left:362px;top:755px;">神器洗米器多功能<span class="el">...</span></div>
<div class="cell num c" style="left:537px;top:755px;width:71px;">16.88</div>
<div class="cell num c" style="left:608px;top:755px;width:140px;">2019-09-30</div>
<div class="cell num c" style="left:748px;top:755px;width:100px;">50006753</div>
<div class="cell" style="left:856px;top:755px;">厨房/烹饪用<span class="el">...</span></div>
<div class="cell" style="left:982px;top:755px;">---</div>
<div class="cell" style="left:1082px;top:755px;"><span class="hs">https://</span><span class="el">...</span></div>
<div class="a" style="left:228px;top:779px;width:945px;height:25px;background:#e9f1f1"></div>
<div class="a" style="left:197px;top:803px;width:1094px;height:1px;background:#f0f2f2"></div>
<div class="a" style="left:269px;top:778px;width:1px;height:25px;background:#eef0f0"></div>
<div class="a" style="left:354px;top:778px;width:1px;height:25px;background:#eef0f0"></div>
<div class="a" style="left:537px;top:778px;width:1px;height:25px;background:#eef0f0"></div>
<div class="a" style="left:608px;top:778px;width:1px;height:25px;background:#eef0f0"></div>
<div class="a" style="left:748px;top:778px;width:1px;height:25px;background:#eef0f0"></div>
<div class="a" style="left:848px;top:778px;width:1px;height:25px;background:#eef0f0"></div>
<div class="a" style="left:974px;top:778px;width:1px;height:25px;background:#eef0f0"></div>
<div class="a" style="left:1073px;top:778px;width:1px;height:25px;background:#eef0f0"></div>
<div class="a" style="left:1173px;top:778px;width:1px;height:25px;background:#eef0f0"></div>
<div class="cb" style="left:205px;top:782px"></div>
<div class="cell num" style="left:232px;top:780px;">24</div>
<div class="cell" style="left:277px;top:780px;">一只房<span class="el">...</span></div>
<div class="cell" style="left:362px;top:780px;">整理便携盒子迷你<span class="el">...</span></div>
<div class="cell num c" style="left:537px;top:780px;width:71px;">15.36</div>
<div class="cell num c" style="left:608px;top:780px;width:140px;">2019-09-30</div>
<div class="cell num c" style="left:748px;top:780px;width:100px;">50025914</div>
<div class="cell" style="left:856px;top:780px;">收纳整理>><span class="el">...</span></div>
<div class="cell" style="left:982px;top:780px;">---</div>
<div class="cell" style="left:1082px;top:780px;"><span class="hs">https://</span><span class="el">...</span></div>
<div class="a" style="left:1291px;top:159px;width:24px;height:645px;background:#f0f0f0"></div>
<div class="a" style="left:1292px;top:184px;width:21px;height:190px;background:#cdcdcd"></div>
<svg class="a" style="left:1294px;top:167px" width="15" height="12" viewBox="0 0 15 12"><path d="M2 9 L7.5 3.5 L13 9" stroke="#555" stroke-width="2.2" fill="none"/></svg>
<svg class="a" style="left:1294px;top:785px" width="15" height="12" viewBox="0 0 15 12"><path d="M2 3 L7.5 8.5 L13 3" stroke="#555" stroke-width="2.2" fill="none"/></svg>
<div class="a" style="left:195px;top:815px;font-size:18px;line-height:24px">状态:</div>
<div class="btn" style="left:364px"><svg class="a" style="left:30px;top:14px" width="15" height="16" viewBox="0 0 15 16"><path d="M0.5 0.5 L14.5 8 L0.5 15.5Z" fill="#fff"/></svg><span class="a" style="left:53px;top:0">开始采集</span></div>
<div class="btn" style="left:562px"><div class="a" style="left:30px;top:15px;width:15px;height:15px;background:#fff"></div><span class="a" style="left:54px;top:0">停止采集</span></div>
<div class="btn" style="left:759px"><svg class="a" style="left:29px;top:13px" width="18" height="16" viewBox="0 0 18 16"><path d="M7.5 3.5 H3 Q1 3.5 1 5.5 V13 Q1 15 3 15 H11 Q13 15 13 13 V10" stroke="#fff" stroke-width="1.9" fill="none"/><path d="M6.5 10 L15 2 M10 1.5 H16 V7.5" stroke="#fff" stroke-width="1.9" fill="none"/></svg><span class="a" style="left:55px;top:0">导出数据</span></div>
<div class="a" style="left:1334px;top:160px;width:344px;height:180px;border:1px solid #dadada"></div>
<div class="a" style="left:1340px;top:149px;background:#fdfdfd;padding:0 5px;font-size:17px;line-height:22px">店铺链接（一行一条）</div>
<div class="a" style="left:1333px;top:177px;width:347px;height:173px;background:#fff;border:1px solid #5a9fe2;overflow:hidden">
<div class="a" style="left:8px;top:4px;font-size:17px;line-height:19.8px;color:#1c1c1c;-webkit-text-stroke-width:0">https://shop166126770.taobao.com<br>https://shop60387553.taobao.com<br>https://shop110282952.taobao.com<br>https://shop310598834.taobao.com<br>https://shop101715378.taobao.com<br>https://shop149886111.taobao.com<br>https://shop488915642.taobao.com<br>https://shop110048420.taobao.com</div>
<div class="a" style="left:321px;top:1px;width:21px;height:170px;background:#f0f0f0"></div>
<div class="a" style="left:321px;top:25px;width:21px;height:81px;background:#cdcdcd"></div>
<svg class="a" style="left:324px;top:8px" width="15" height="12" viewBox="0 0 15 12"><path d="M2 9 L7.5 3.5 L13 9" stroke="#555" stroke-width="2.2" fill="none"/></svg>
</div>
<div class="a" style="left:1493.5px;top:233px;width:1.2px;height:11px;background:#333"></div>
<div class="a" style="left:1488px;top:240px;width:1.5px;height:19px;background:#1a1a2a"></div>
<div class="a" style="left:1333px;top:383px;width:347px;height:97px;background:#fff;border:1px solid #a8a8a8"></div>
<div class="a" style="left:1654px;top:384px;width:22px;height:95px;background:#f0f0f0"></div>
<svg class="a" style="left:1658px;top:458px" width="15" height="12" viewBox="0 0 15 12"><path d="M2 3 L7.5 8.5 L13 3" stroke="#bdbdbd" stroke-width="2" fill="none"/></svg>
<div class="a" style="left:1333px;top:497px;width:346px;height:308px;border:1px solid #dcdcdc"></div>
<div class="a" style="left:1340px;top:486px;background:#fdfdfd;padding:0 4px;font-size:17px;line-height:22px">采集设置</div>
<div class="sc" style="left:1361px;top:514px"></div>
<div class="a" style="left:1383px;top:511px;font-size:17px;line-height:24px">价格:</div>
<div class="inp" style="left:1435px;top:509px;width:69px;height:27px;line-height:25px">10</div>
<div class="a" style="left:1511px;top:510px;font-size:17px;line-height:24px">元</div>
<div class="a" style="left:1541px;top:508px;font-size:14px;line-height:24px">-</div>
<div class="inp" style="left:1559px;top:509px;width:76px;height:27px;line-height:25px">200</div>
<div class="a" style="left:1641px;top:510px;font-size:17px;line-height:24px">元</div>
<div class="sc" style="left:1359px;top:556px"></div><svg class="a" style="left:1359px;top:556px" width="18" height="18" viewBox="0 0 18 18"><path d="M3.2 9.5 L7 13 L14.5 4.8" stroke="#4a4a4a" stroke-width="1.7" fill="none"/></svg>
<div class="a" style="left:1381px;top:554px;font-size:17px;line-height:24px">宝贝发布:</div>
<div class="inp" style="left:1472px;top:551px;width:100px;height:27px;line-height:25px">5</div>
<div class="a" style="left:1581px;top:550px;font-size:17px;line-height:24px">天内</div>
<div class="sc" style="left:1359px;top:595px"></div><svg class="a" style="left:1359px;top:595px" width="18" height="18" viewBox="0 0 18 18"><path d="M3.2 9.5 L7 13 L14.5 4.8" stroke="#4a4a4a" stroke-width="1.7" fill="none"/></svg>
<div class="a" style="left:1381px;top:593px;font-size:17px;line-height:24px">隐藏链接(无隐藏链接显示同款链接)</div>
<div class="sc" style="left:1359px;top:633px"></div><svg class="a" style="left:1359px;top:633px" width="18" height="18" viewBox="0 0 18 18"><path d="M3.2 9.5 L7 13 L14.5 4.8" stroke="#4a4a4a" stroke-width="1.7" fill="none"/></svg>
<div class="a" style="left:1381px;top:630px;font-size:17px;line-height:24px">获取类目</div>
<div class="sc" style="left:1468px;top:633px"></div><svg class="a" style="left:1468px;top:633px" width="18" height="18" viewBox="0 0 18 18"><path d="M3.2 9.5 L7 13 L14.5 4.8" stroke="#4a4a4a" stroke-width="1.7" fill="none"/></svg>
<div class="a" style="left:1490px;top:629px;font-size:17px;line-height:24px">过滤类目</div>
<div class="a" style="left:1571px;top:621px;width:76px;height:33px;background:#e1e1e1;border:1px solid #adadad;text-align:center;font-size:17px;line-height:31px">设置</div>
<div class="sc" style="left:1359px;top:672px"></div><svg class="a" style="left:1359px;top:672px" width="18" height="18" viewBox="0 0 18 18"><path d="M3.2 9.5 L7 13 L14.5 4.8" stroke="#4a4a4a" stroke-width="1.7" fill="none"/></svg>
<div class="a" style="left:1381px;top:669px;font-size:17px;line-height:24px">定时间隔时间</div>
<div class="inp" style="left:1495px;top:665px;width:77px;height:28px;line-height:26px">30</div>
<div class="a" style="left:1580px;top:666px;font-size:17px;line-height:24px">分钟</div>
<div class="a" style="left:1077px;top:331px;width:594px;height:77px;background:#fff;border:1px solid #8a8a8a;box-shadow:2px 3px 4px rgba(0,0,0,0.35)">
<div class="a" style="left:8px;top:1.7px;font-size:17px;line-height:24.3px;color:#555;-webkit-text-stroke-width:0"><span style="letter-spacing:0.5px">https://s.taobao.com/</span><br>search?app=imgsearchtfsid=O1CN012tezpx2B000L7HoRX_!!14290827<br>5.jpg</div>
</div>
<div class="a" style="left:1277px;top:377px;width:6px;height:1.3px;background:#666"></div>
<svg class="a" style="left:1552px;top:865px" width="37" height="42" viewBox="0 0 37 42">
<path d="M36 1 V9.5 H14 C10 9.5 7.5 11.5 7.5 14.5 C7.5 19 13 23 21 25.5 C11 27 0 23 0 14 C0 6 6 1 14 1 Z" fill="#86cdef"/>
<path d="M15 16 C23 15.5 31 18.5 34.5 22.5 C36 24.5 36.5 27 36.5 29.5 C36.5 36 31 40.5 23 40.5 H0 V32 H22 C26 32 28 30 28 27.5 C28 22 22 17.5 15 16 Z" fill="#8fdf8f"/>
</svg>
<div class="a" style="left:1595px;top:863px;font-size:22.5px;line-height:26px;color:#8ade8a">霖哥店群</div>
<div class="a" style="left:1599px;top:885px;font-size:18px;line-height:24px;color:#7acaf0">51qpm.cn</div>
<div class="a" style="left:1693px;top:135px;width:1px;height:776px;background:#b4b4bc"></div>
<div class="a" style="left:1672px;top:364px;width:6px;height:19px;border-top:1px solid #dcdcdc;border-right:1px solid #dcdcdc"></div>
<div class="a" style="left:0;top:910px;width:1544px;height:1px;background:#4a4a4a"></div><div class="a" style="left:1544px;top:910px;width:150px;height:1px;background:#a8a8a8"></div>
</body></html>
